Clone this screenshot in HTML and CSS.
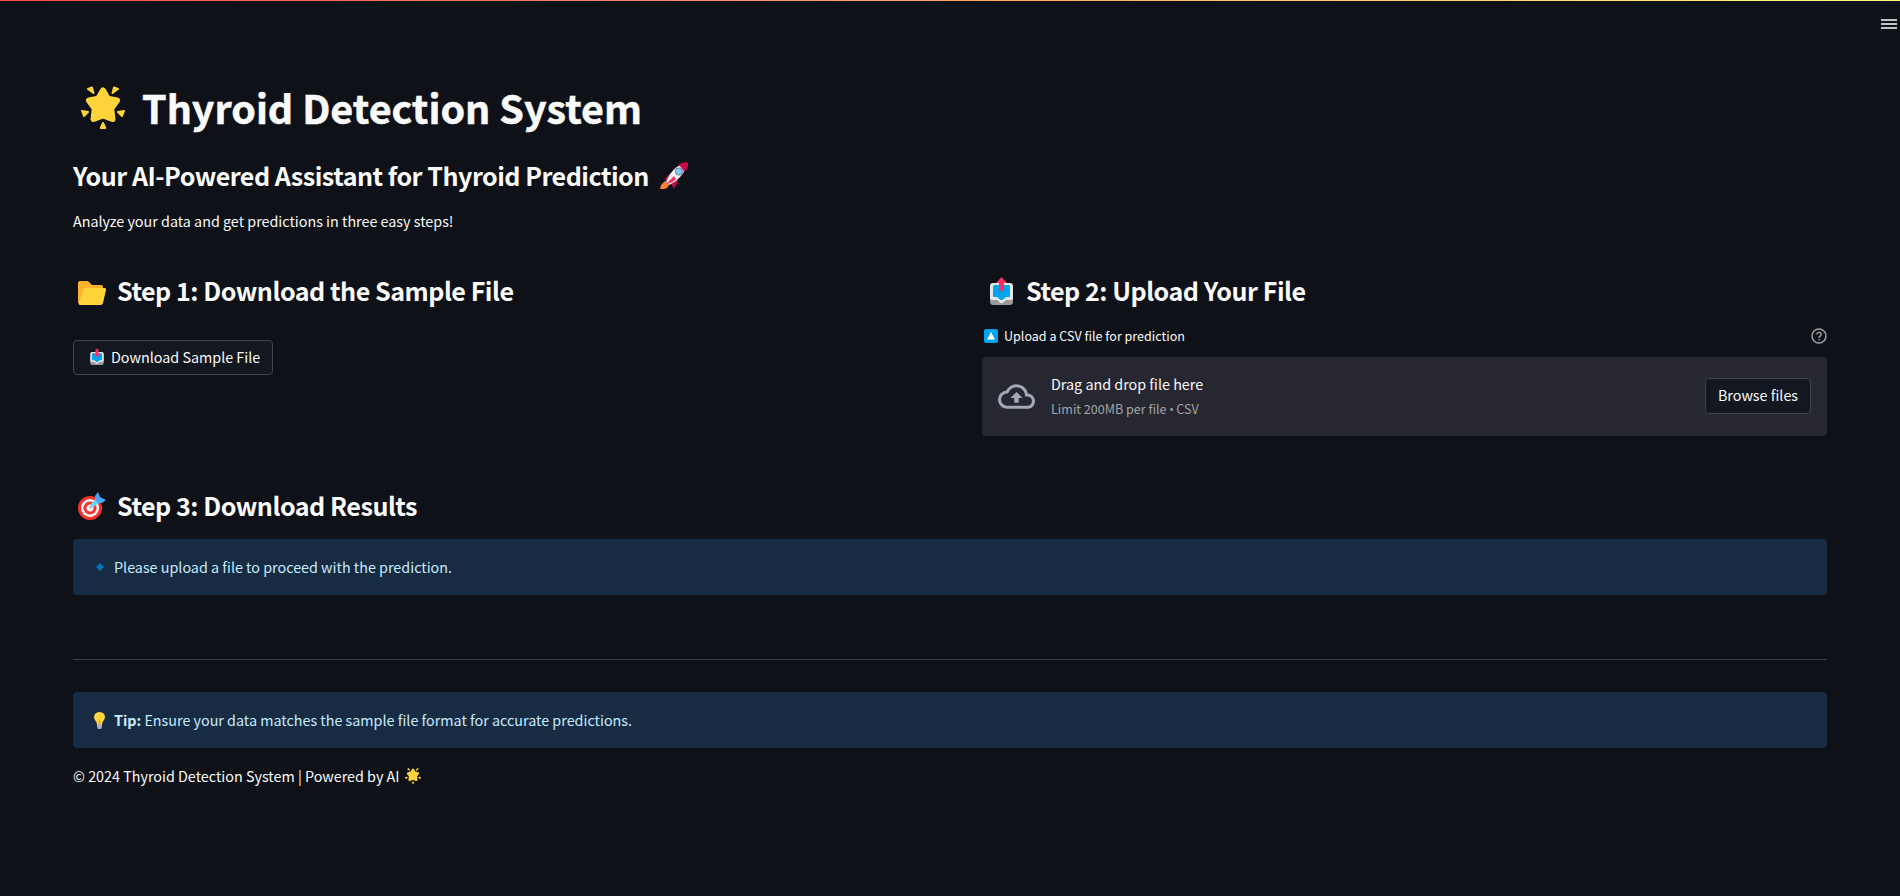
FILE: index.html
```html
<!DOCTYPE html>
<html lang="en">
<head>
<meta charset="utf-8">
<title>Thyroid Detection System</title>
<link rel="stylesheet" href="styles.css">
</head>
<body>
<svg class="defs" width="0" height="0">
  <defs>
    <symbol id="star" viewBox="0 0 44 44">
      <path fill="#ffd43b" stroke="#ffd43b" stroke-width="6" stroke-linejoin="round" d="M22 4.500L26.800 12.700L36 14.500L30.200 22.500L31.500 33L22 29.500L12.500 33L13.800 22.500L8 14.500L17.200 12.700Z"/>
      <path fill="#ffd43b" stroke="#ffd43b" stroke-width="2" stroke-linejoin="round" d="M7 3L11 1.500L12.500 7ZM37 3L33 1.500L31.500 7ZM1 25L7 26L3 30ZM43 25L37 26L41 30ZM22 37L24.200 42H19.800Z"/>
    </symbol>
    <symbol id="tray" viewBox="0 0 23 24">
      <rect x="0" y="4" width="23" height="20" rx="3.500" fill="#9b9b9b"/>
      <path fill="#e6e6e6" d="M3 2H20Q23 2 23 5V17Q23 19 20 19H16L12.500 22H10.500L7 19H3Q0 19 0 17V5Q0 2 3 2Z"/>
      <path fill="#00a6ed" d="M4.500 4H18.500Q20 4 20 6V15Q20 16 19 16H16L12.500 19H10.500L7 16H4Q3 16 3 15V6Q3 4 4.500 4Z"/>
    </symbol>
  </defs>
</svg>
<div class="rainbow"></div>
<svg class="menu" viewBox="0 0 16 10"><path fill="#fafafa" d="M0 0.200H16V1.800H0ZM0 4.200H16V5.800H0ZM0 8.200H16V9.800H0Z"/></svg>
<main class="page">
  <h1 class="title"><svg class="title-star"><use href="#star"/></svg><span>Thyroid Detection System</span></h1>
  <h2 class="subtitle"><span>Your AI-Powered Assistant for Thyroid Prediction</span>
    <svg class="rocket" viewBox="0 0 28 28">
      <path fill="#ff822d" d="M5 19L9 23L7 26L4 27L0 27L1 23Z"/>
      <path fill="#ca0b4a" d="M7 14L13 11L18 15L17 21L14 27L12 23L5 18Z"/>
      <path fill="#f4f4f4" d="M6 20L10 12Q17 3 25 1Q28 1 27 4Q24 12 16 19L9 23Z"/>
      <path fill="#ca0b4a" d="M18 3Q22 0 27 0Q29 1 27 7L24 10Q22 5 18 3Z"/>
      <path fill="#f92f60" d="M6 22L14 14L16 17Q13 21 6 22Z"/>
      <circle cx="19" cy="9.500" r="3.400" fill="#83cbff" stroke="#7d8fa0" stroke-width="1.200"/>
    </svg></h2>
  <p class="intro">Analyze your data and get predictions in three easy steps!</p>
  <div class="columns">
    <section class="column">
      <h2 class="step"><span class="step-icon folder"><svg width="28" height="24" viewBox="0 0 28 24"><path fill="#ffb02e" d="M0 2Q0 0 2 0H9Q10 0 11 1L14 4H23Q25 4 25 6V18H4L2 23Q0 23 0 21Z"/><path fill="#ffd43b" d="M7 7H26.500Q28.300 7 28 9L25 22Q24.500 24 22.500 24H2Q.5 24 1 22L5 9Q5.500 7 7 7Z"/></svg></span><span>Step 1: Download the Sample File</span></h2>
      <button class="button download"><svg class="mini-tray" viewBox="0 0 23 27"><use href="#tray" y="3" width="23" height="24"/><path fill="#f92f60" d="M9 0H14V8H17.500L11.500 14L5.500 8H9Z"/></svg><span>Download Sample File</span></button>
    </section>
    <section class="column">
      <h2 class="step"><span class="step-icon"><svg width="23" height="28" viewBox="0 0 23 28"><use href="#tray" y="4" width="23" height="24"/><path fill="#f92f60" d="M11.500 0L17 6H14V14H9V6H6Z"/></svg></span><span>Step 2: Upload Your File</span></h2>
      <div class="label"><svg width="14" height="14" viewBox="0 0 14 14"><rect width="14" height="14" rx="2" fill="#00a6ed"/><path fill="#fff" d="M7 3L11 10.500H3Z"/></svg><span>Upload a CSV file for prediction</span>
        <svg class="help" viewBox="0 0 16 16" fill="none" stroke="#a3a4a8" stroke-width="1.400"><circle cx="8" cy="8" r="7"/><path d="M5.900 6.500a2.100 2.100 0 1 1 3.200 1.700Q8 8.800 8 9.900M8 11.200V12.400"/></svg></div>
      <div class="dropzone">
        <svg class="cloud" viewBox="0 4 24 16"><path fill="#a3a8b8" d="M19.350 10.040A7.490 7.490 0 0 0 12 4C9.110 4 6.600 5.640 5.350 8.040A5.994 5.994 0 0 0 0 14c0 3.310 2.690 6 6 6h13c2.760 0 5-2.240 5-5 0-2.640-2.050-4.780-4.650-4.960zM19 18H6c-2.210 0-4-1.790-4-4 0-2.050 1.530-3.760 3.560-3.970l1.070-.11.5-.95A5.469 5.469 0 0 1 12 6c2.620 0 4.880 1.860 5.390 4.430l.3 1.500 1.530.11A2.980 2.980 0 0 1 22 15c0 1.650-1.350 3-3 3zM8 13h2.550v3h2.900v-3H16l-4-4z"/></svg>
        <div class="drop-text"><span>Drag and drop file here</span><span class="limit">Limit 200MB per file <span class="bullet">•</span> CSV</span></div>
        <button class="button browse"><span>Browse files</span></button>
      </div>
    </section>
  </div>
  <h2 class="step results"><span class="step-icon"><svg width="28" height="28" viewBox="0 0 28 28"><circle cx="12" cy="16" r="12" fill="#f8312f"/><circle cx="12" cy="16" r="9" fill="#f4f4f4"/><circle cx="12" cy="16" r="6.500" fill="#f8312f"/><circle cx="12" cy="16" r="3.500" fill="#f4f4f4"/><path stroke="#9b9b9b" stroke-width="1.500" d="M12 16L17 11"/><path fill="#50e2ff" d="M13 12L18 7L22 5L24 7L20 12L15 15Z"/><path fill="#46a4fb" d="M17 8V4L20 0L22 5L28 8L24 11H20Z"/></svg></span><span>Step 3: Download Results</span></h2>
  <div class="alert"><span class="alert-icon"><svg width="8" height="8" viewBox="0 0 8 8"><path fill="#0074ba" d="M4 0L8 4L4 8L0 4Z"/></svg></span><span>Please upload a file to proceed with the prediction.</span></div>
  <hr class="rule">
  <div class="alert"><span class="alert-icon tip"><svg width="11" height="17" viewBox="0 0 11 17"><path fill="#fcd53f" d="M5.500 0Q11 .3 11 5.500Q10.600 8 8.500 10L8 13H3L2.500 10Q.4 8 0 5.500Q0 .3 5.500 0Z"/><path fill="#ffb02e" d="M4.800 7H6.200L7 13H4Z"/><path fill="#b4acbc" d="M3 12.500H8V15L7 17H4L3 15Z"/></svg></span><span><strong>Tip:</strong> Ensure your data matches the sample file format for accurate predictions.</span></div>
  <p class="footer"><span>© 2024 Thyroid Detection System | Powered by AI</span><svg class="foot-star"><use href="#star"/></svg></p>
</main>
</body>
</html>
```
FILE: styles.css
```css
* { box-sizing: border-box; }
body { margin: 0; height: 896px; overflow: hidden; background: #0e1117; color: #fafafa; font-family: "Noto Sans CJK SC", "Open Sans", sans-serif; font-size: 14.34px; line-height: 24px; }
h1, h2, p { margin: 0; }
svg { display: block; flex: none; }
span { white-space: nowrap; }
.defs { position: absolute; }
.rainbow { position: absolute; top: 0; left: 0; right: 0; height: 1px; background: linear-gradient(90deg, #ff4b4b, #fffd80); }
.menu { position: absolute; right: 3px; top: 19px; width: 16px; height: 10px; }
.page { padding: 80px 73px 0; }
.title { display: flex; align-items: center; height: 54px; font-size: 39.43px; line-height: 54px; font-weight: 700; -webkit-text-stroke: 0.5px #fafafa; }
.title-star { width: 44px; height: 44px; margin: 1px 17px 0 8px; }
.subtitle { display: flex; align-items: center; margin-top: 25px; height: 33px; font-size: 25.1px; line-height: 33px; font-weight: 700; letter-spacing: -0.5px; }
.rocket { width: 28px; height: 28px; margin-left: 11px; }
.intro { margin-top: 17px; height: 24px; }
.columns { display: grid; grid-template-columns: 845px 845px; justify-content: space-between; margin-top: 40px; height: 163px; }
.step { display: flex; align-items: center; height: 34px; font-size: 25.1px; line-height: 34px; font-weight: 700; letter-spacing: -0.48px; }
.step-icon { display: flex; justify-content: center; width: 28px; margin: 2px 11px 0 5px; }
.folder { margin-top: 5px; }
.button { display: flex; align-items: center; border: 1px solid #41444c; border-radius: 4px; background: #131720; color: #fafafa; font: inherit; line-height: 24px; padding: 0 0 1px; }
.download { width: 200px; height: 35px; margin-top: 33px; padding-left: 16px; }
.mini-tray { width: 14px; height: 16px; margin-right: 7px; }
.label { display: flex; align-items: center; height: 21px; margin-top: 18px; padding-left: 2px; font-size: 12.55px; line-height: 21px; gap: 6px; }
.help { width: 16px; height: 16px; margin-left: auto; }
.dropzone { display: flex; align-items: center; height: 79px; margin-top: 11px; padding: 0 16px; border-radius: 4px; background: #262730; }
.cloud { width: 37px; height: 25px; margin-right: 16px; }
.drop-text { display: flex; flex-direction: column; }
.limit { font-size: 12.55px; line-height: 25px; color: #a3a4a8; }
.bullet { font-family: "Open Sans", sans-serif; line-height: 1; letter-spacing: -0.5px; }
.browse { width: 106px; height: 36px; margin-left: auto; margin-bottom: 1px; padding-bottom: 2px; justify-content: center; }
.results { margin-top: 52px; }
.alert { display: flex; align-items: center; height: 56px; border-radius: 4px; background: #172c43; color: #c7ebff; padding-left: 16px; }
.results + .alert { margin-top: 17px; }
.alert-icon { display: flex; justify-content: center; width: 22px; margin-right: 3px; }
.tip { padding-right: 1px; }
.rule { border: 0; height: 1px; margin: 64px 0 32px; background: #3d3f45; }
.footer { display: flex; align-items: center; height: 24px; margin-top: 16px; }
.foot-star { width: 16px; height: 16px; margin-left: 6px; }
```
